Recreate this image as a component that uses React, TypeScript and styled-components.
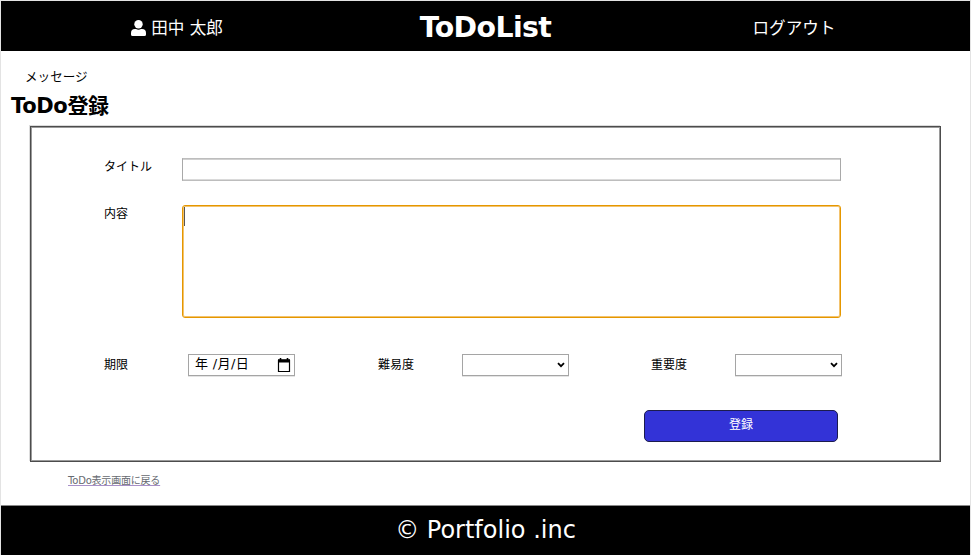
import React from "react";
import styled, { createGlobalStyle } from "styled-components";

const Global = createGlobalStyle`
  * { box-sizing: border-box; }
  html, body { margin: 0; background: #fff; overflow: hidden; }
  body { font-family: "DejaVu Sans", "Noto Sans CJK JP", sans-serif; color: #000; }
`;

const Page = styled.div`
  width: 971px;
  height: 555px;
  display: flex;
  flex-direction: column;
  border: solid #e3e3e3;
  border-width: 1px 1px 0 1px;
  white-space: nowrap;
`;

const Header = styled.header`
  height: 50px;
  flex: none;
  background: #000;
  color: #fff;
  display: grid;
  grid-template-columns: 352px 265px 352px;
  align-items: center;
  justify-items: center;
`;

const HeaderItem = styled.div`
  display: flex;
  align-items: center;
  gap: 5px;
  font-size: 16.6px;
  line-height: 24px;
  padding-top: 6px;
  svg { display: block; margin-top: -3px; }
`;

const Brand = styled.h1`
  margin: 0;
  padding-top: 4px;
  font-size: 28.4px;
  line-height: 34px;
  letter-spacing: -0.6px;
`;

const Main = styled.main`
  flex: 1;
  display: flex;
  flex-direction: column;
  align-items: flex-start;
`;

const Message = styled.p`
  margin: 16px 0 0 24px;
  font-size: 12.6px;
  line-height: 20px;
`;

const Heading = styled.h2`
  margin: 4px 0 0 10px;
  height: 35px;
  font-size: 21px;
  line-height: 30px;
  letter-spacing: -0.35px;
`;

const Form = styled.form`
  margin-left: 29px;
  width: 911px;
  height: 336px;
  border: 1px solid #4c4c4c;
  box-shadow: inset 0 0 0 1px #9a9a9a, -1px -1px 0 #dcdcdc;
  padding: 31px 98px 0 73px;
`;

const Row = styled.div<{ $height: number }>`
  display: flex;
  align-items: flex-start;
  height: ${(p) => p.$height}px;
`;

const Label = styled.label<{ $width: number; $top?: number }>`
  width: ${(p) => p.$width}px;
  flex: none;
  padding-top: ${(p) => p.$top ?? 1}px;
  font-size: 12px;
  line-height: 18px;
`;

const TitleInput = styled.input`
  width: 659px;
  height: 23px;
  margin: 0;
  border: 1px solid #a9a9a9;
  border-top-color: #bdbdbd;
  border-bottom-color: #bdbdbd;
  box-shadow: inset 0 1px 0 #d0d0d0, inset 0 -1px 0 #dadada;
  outline: none;
`;

const Content = styled.div`
  width: 659px;
  height: 113px;
  border: 1px solid #e59700;
  border-radius: 3px;
  box-shadow: inset 0 0 0 1px #f3c36e;
  padding: 1px;
`;

const Caret = styled.span`
  display: block;
  width: 1px;
  height: 19px;
  background: #555;
`;

const Field = styled.div<{ $width: number }>`
  width: ${(p) => p.$width}px;
  height: 22px;
  border: 1px solid #a5a5a5;
  box-shadow: 0 1px 0 #e4e4e4;
  display: flex;
  align-items: center;
  justify-content: space-between;
  padding: 0 3px 0 6px;
  font-size: 13px;
  line-height: 18px;
  svg { display: block; margin-left: auto; }
`;

const Group = styled.div<{ $width: number }>`
  width: ${(p) => p.$width}px;
  flex: none;
  display: flex;
`;

const DateText = styled.span`
  margin-top: -2px;
  letter-spacing: 0.35px;
`;

const Submit = styled.button`
  display: block;
  margin: 1px 0 0 540px;
  padding: 0 0 3px;
  width: 194px;
  height: 32px;
  border: 1px solid #1c1c4e;
  border-radius: 5px;
  background: #3333d7;
  color: #fff;
  font: 12px/18px "DejaVu Sans", "Noto Sans CJK JP", sans-serif;
`;

const BackLink = styled.a`
  margin: 11px 0 0 67px;
  font-size: 10px;
  line-height: 16px;
  letter-spacing: -0.2px;
  color: #666a70;
  text-decoration: underline #a890c8;
`;

const Footer = styled.footer`
  flex: none;
  height: 50px;
  border-top: 1px solid #888;
  background: #000;
  color: #fff;
  display: flex;
  justify-content: center;
  font-size: 24px;
  line-height: 48px;
`;

const Chevron = () => (
  <svg width="8" height="6" viewBox="0 0 8 6" fill="none" stroke="#000" strokeWidth="1.8">
    <path d="M1 1.2 4 4.2 7 1.2" />
  </svg>
);

export default function App() {
  return (
    <>
      <Global />
      <Page>
        <Header>
          <HeaderItem>
            <svg width="15" height="16" viewBox="0 0 15 16" fill="#fff">
              <circle cx="7.5" cy="4.2" r="4.2" />
              <path d="M0 14.5V13a4 4 0 0 1 4-4h1a5.5 5.5 0 0 0 5 0h1a4 4 0 0 1 4 4v1.5a1.5 1.5 0 0 1-1.5 1.5h-12A1.5 1.5 0 0 1 0 14.5z" />
            </svg>
            <span>田中 太郎</span>
          </HeaderItem>
          <Brand>ToDoList</Brand>
          <HeaderItem>ログアウト</HeaderItem>
        </Header>
        <Main>
          <Message>メッセージ</Message>
          <Heading>ToDo登録</Heading>
          <Form>
            <Row $height={47}>
              <Label $width={78} $top={0}>タイトル</Label>
              <TitleInput />
            </Row>
            <Row $height={149}>
              <Label $width={78} $top={0}>内容</Label>
              <Content><Caret /></Content>
            </Row>
            <Row $height={55}>
              <Group $width={274}>
                <Label $width={84} $top={2}>期限</Label>
                <Field $width={107}>
                  <DateText>年&nbsp;/月/日</DateText>
                  <svg width="14" height="14" viewBox="0 0 14 14">
                    <path d="M3.5 0v2M10.5 0v2" stroke="#000" strokeWidth="1.6" />
                    <path d="M1.5 2.5h11v11h-11z" fill="none" stroke="#000" strokeWidth="1.2" />
                    <path d="M1 1.2h12v3.3H1z" />
                  </svg>
                </Field>
              </Group>
              <Group $width={273}>
                <Label $width={84} $top={2}>難易度</Label>
                <Field $width={107}><Chevron /></Field>
              </Group>
              <Group $width={191}>
                <Label $width={84} $top={2}>重要度</Label>
                <Field $width={107}><Chevron /></Field>
              </Group>
            </Row>
            <Submit type="button">登録</Submit>
          </Form>
          <BackLink>ToDo表示画面に戻る</BackLink>
        </Main>
        <Footer>© Portfolio .inc</Footer>
      </Page>
    </>
  );
}
